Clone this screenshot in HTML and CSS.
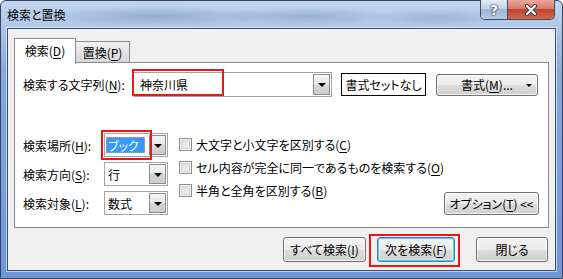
FILE: index.html
```html
<!DOCTYPE html>
<html lang="ja">
<head>
    <meta charset="UTF-8">
    <title>検索と置換</title>
    <link rel="stylesheet" href="styles.css">
</head>
<body>
<div class="window">
    <div class="titlebar">
        <span class="title">検索と置換</span>
        <div class="caption-buttons">
            <div class="cap-btn help">?</div>
            <div class="cap-btn close">
                <svg width="16" height="12" viewBox="0 0 16 12">
                    <path d="M4 2 L12 10 M12 2 L4 10" stroke="#3a3f4a" stroke-width="4.2" stroke-linecap="round"/>
                    <path d="M4 2 L12 10 M12 2 L4 10" stroke="#ffffff" stroke-width="2.2" stroke-linecap="round"/>
                </svg>
            </div>
        </div>
    </div>
    <div class="client">
        <div class="tabs">
            <div class="tab active">検索(<u>D</u>)</div>
            <div class="tab">置換(<u>P</u>)</div>
        </div>
        <div class="panel">
            <div class="find-row">
                <label class="field-label find-label">検索する文字列(<u>N</u>):</label>
                <div class="combo combo-find"><span class="combo-value">神奈川県</span><span class="drop"></span></div>
                <div class="format-none">書式セットなし</div>
                <button class="btn btn-format"><span>書式(<u>M</u>)...</span><span class="small-arrow"></span></button>
            </div>
            <div class="options">
                <div class="option-grid">
                    <label class="field-label">検索場所(<u>H</u>):</label>
                    <div class="combo"><span class="combo-value selected">ブック</span><span class="drop"></span></div>
                    <label class="field-label">検索方向(<u>S</u>):</label>
                    <div class="combo"><span class="combo-value">行</span><span class="drop"></span></div>
                    <label class="field-label">検索対象(<u>L</u>):</label>
                    <div class="combo"><span class="combo-value">数式</span><span class="drop"></span></div>
                </div>
                <div class="checks">
                    <label class="check"><span class="box"></span>大文字と小文字を区別する(<u>C</u>)</label>
                    <label class="check"><span class="box"></span>セル内容が完全に同一であるものを検索する(<u>O</u>)</label>
                    <label class="check"><span class="box"></span>半角と全角を区別する(<u>B</u>)</label>
                </div>
                <button class="btn btn-options">オプション(<u>T</u>) &lt;&lt;</button>
            </div>
        </div>
        <div class="actions">
            <button class="btn btn-all">すべて検索(<u>I</u>)</button>
            <button class="btn btn-next default">次を検索(<u>F</u>)</button>
            <button class="btn btn-close">閉じる</button>
        </div>
    </div>
    <!-- red annotation frames -->
    <div class="mark mark-find"></div>
    <div class="mark mark-where"></div>
    <div class="mark mark-next"></div>
</div>
</body>
</html>
```

FILE: styles.css
```css
:root {
    --text: #000000; --dialog-bg: #f0f0f0; --tab-border: #898c95;
    --btn-border: #707070; --combo-border: #a5a5a5; --mark: #f01515;
    --font-ui: "Noto Sans CJK JP", "Noto Sans", sans-serif;
}
* { box-sizing: border-box; }
body {
    margin: 0; font-family: var(--font-ui); font-size: 12px; color: var(--text); background: #ffffff;
    font-feature-settings: "palt"; white-space: nowrap;
}
u { text-underline-offset: 2px; }

.window {
    position: relative; width: 563px; height: 279px; padding: 0 6px 7px 6px;
    display: flex; flex-direction: column; border: 1px solid #34465f; border-radius: 6px 6px 0 0;
    background: linear-gradient(180deg, #c4d6ee 0px, #afc7e7 26px, #86a9dc 70px, #6e97d8 100%);
}
.titlebar {
    height: 27px; display: flex; align-items: flex-start; flex-shrink: 0;
    background: radial-gradient(ellipse 120px 10px at 150px 15px, rgba(60, 85, 130, 0.28), transparent),
                radial-gradient(ellipse 90px 9px at 300px 15px, rgba(60, 85, 130, 0.25), transparent),
                radial-gradient(ellipse 70px 9px at 430px 16px, rgba(60, 85, 130, 0.2), transparent);
}
.title { line-height: 16px; margin-top: 6px; }
.caption-buttons {
    margin-left: auto; margin-top: -1px; margin-right: 1px; display: flex; height: 20px;
    border: 1px solid #3d4a60; border-top: none; border-radius: 0 0 5px 5px; overflow: hidden;
}
.cap-btn { display: flex; align-items: center; justify-content: center; height: 100%; }
.help {
    width: 27px; border-right: 1px solid #3d4a60; color: #ffffff; font-weight: 700; font-size: 14px;
    font-family: "DejaVu Sans", sans-serif;
    text-shadow: 0 0 1px #2b3443, 0 0 1px #2b3443, 0 0 2px #2b3443;
    background: linear-gradient(180deg, #e3ebf5 0%, #c3d3e8 45%, #9fb6d6 50%, #b5c9e3 100%);
}
.close { width: 46px; background: linear-gradient(180deg, #e9a99c 0%, #d77c69 45%, #c2432b 50%, #d26a4d 100%); }

.client {
    flex: 1; display: flex; flex-direction: column; padding: 9px 6px 0 6px;
    background: var(--dialog-bg); border: 1px solid #3c4e6d; box-shadow: 0 0 0 1px rgba(255, 255, 255, 0.55);
}
.tabs { display: flex; height: 25px; }
.tab {
    display: flex; align-items: center; justify-content: center; margin-top: 3px; height: 22px; width: 54px;
    border: 1px solid var(--tab-border); border-bottom: none; border-left: none;
    background: linear-gradient(180deg, #f3f3f3, #e2e2e2 50%, #d8d8d8);
}
.tab.active {
    margin-top: 0; height: 26px; width: 62px; border-left: 1px solid var(--tab-border);
    background: #ffffff; position: relative; z-index: 1; padding-bottom: 2px;
}
.panel {
    margin-top: -1px; height: 166px; background: #ffffff; border: 1px solid var(--tab-border);
    padding: 9px 9px 0 8px;
}
.field-label { display: flex; align-items: center; }
.find-row { display: flex; align-items: center; height: 25px; }
.find-label { width: 110px; }
.combo {
    display: flex; height: 24px; background: #ffffff; border: 1px solid var(--combo-border);
}
.combo-find { width: 199px; height: 25px; }
.combo-value { flex: 1; display: flex; align-items: center; padding-left: 2px; margin: 3px 3px 3px 1px; }
.combo-find .combo-value { padding-left: 5px; }
.combo-value.selected { background: #3399ff; color: #ffffff; outline: 1px dotted #f2a23a; outline-offset: -1px; }
.drop {
    width: 17px; margin: 1px; display: flex; align-items: center; justify-content: center;
    border: 1px solid #8c8c8c; background: linear-gradient(180deg, #f6f6f6, #e6e6e6 50%, #d6d6d6 51%, #cdcdcd);
}
.drop::after {
    content: ""; width: 0; height: 0; margin-top: 1px;
    border-left: 4px solid transparent; border-right: 4px solid transparent; border-top: 4px solid #000000;
}
.format-none {
    margin-left: 9px; width: 85px; height: 23px; border: 1px solid #000000;
    display: flex; align-items: center; justify-content: center;
}
.btn {
    font-family: var(--font-ui); font-size: 12px; font-feature-settings: "palt"; white-space: nowrap;
    color: var(--text); height: 23px; padding: 0;
    border: 1px solid var(--btn-border); border-radius: 3px;
    background: linear-gradient(180deg, #f2f2f2 0%, #ebebeb 50%, #dddddd 51%, #cfcfcf 100%);
    box-shadow: inset 0 0 0 1px rgba(255, 255, 255, 0.75);
    display: flex; align-items: center; justify-content: center;
}
.btn-format { margin-left: 10px; width: 102px; height: 22px; position: relative; }
.small-arrow {
    position: absolute; right: 5px; top: 9px; width: 0; height: 0;
    border-left: 3px solid transparent; border-right: 3px solid transparent; border-top: 3px solid #000000;
}
.options { display: flex; align-items: flex-start; margin-top: 36px; }
.option-grid { display: grid; grid-template-columns: 81px 64px; grid-auto-rows: 24px; row-gap: 5px; }
.checks { display: flex; flex-direction: column; margin-left: 11px; }
.check { display: flex; align-items: center; height: 23px; }
.box {
    width: 13px; height: 13px; margin-right: 4px; flex-shrink: 0; border: 1px solid #8e8f8f;
    background: linear-gradient(135deg, #dadada, #f5f5f5);
    box-shadow: inset 0 0 0 1px #f4f4f4, inset 0 0 0 2px #d4d4d4;
}
.btn-options { margin-left: auto; align-self: flex-end; width: 101px; }

.actions { display: flex; justify-content: flex-end; margin-top: 9px; padding-right: 1px; }
.actions .btn { height: 25px; }
.btn-all { width: 83px; }
.btn-next { width: 78px; margin-left: 11px; }
.btn-close { width: 72px; margin-left: 21px; }
.btn.default { border-color: #3c7fb1; box-shadow: inset 0 0 0 1px #46d1f6, inset 0 0 0 2px rgba(255, 255, 255, 0.4); }

.mark { position: absolute; border: 2px solid var(--mark); }
.mark-find { left: 131px; top: 68px; width: 92px; height: 27px; }
.mark-where { left: 100px; top: 129px; width: 51px; height: 30px; }
.mark-next { left: 368px; top: 233px; width: 91px; height: 33px; }
```
